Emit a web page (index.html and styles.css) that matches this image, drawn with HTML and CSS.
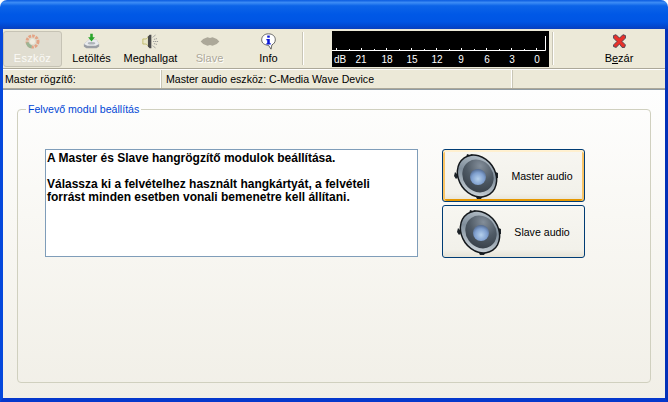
FILE: index.html
```html
<!DOCTYPE html>
<html lang="hu">
<head>
    <meta charset="UTF-8">
    <title>Felvevő modul beállítás</title>
    <link rel="stylesheet" href="styles.css">
</head>
<body>
    <svg class="defs" width="0" height="0">
        <defs>
            <radialGradient id="coneGrad" cx="0.3" cy="0.25" r="0.9">
                <stop offset="0" stop-color="#838e9a"/>
                <stop offset="0.5" stop-color="#4f5a65"/>
                <stop offset="1" stop-color="#343c45"/>
            </radialGradient>
            <radialGradient id="capGrad" cx="0.5" cy="0.62" r="0.6">
                <stop offset="0" stop-color="#b5d0ec"/>
                <stop offset="0.65" stop-color="#7f9fce"/>
                <stop offset="1" stop-color="#566e94"/>
            </radialGradient>
            <linearGradient id="rimGrad" x1="0" y1="0" x2="1" y2="1">
                <stop offset="0" stop-color="#c4ced6"/>
                <stop offset="0.45" stop-color="#808e9b"/>
                <stop offset="1" stop-color="#dfe6ea"/>
            </linearGradient>
            <symbol id="bigSpeaker" viewBox="0 0 46 46">
                <path d="M12 5l1-4 3 1 2-1 2 2-2 3zM39 18l5 2 0 5-4 1zM21 42l2 4 4 0 2-3zM1 19l-1 4 2 3 3-3z" fill="#1d2328"/>
                <ellipse cx="23" cy="23" rx="23" ry="19" transform="rotate(55 23 23)" fill="#14181c"/>
                <ellipse cx="23" cy="23" rx="21.500" ry="17.500" transform="rotate(55 23 23)" fill="url(#rimGrad)"/>
                <ellipse cx="24" cy="23" rx="17" ry="15" transform="rotate(55 24 23)" fill="url(#coneGrad)"/>
                <circle cx="24" cy="24" r="8" fill="url(#capGrad)"/>
            </symbol>
        </defs>
    </svg>

    <div class="window">
        <div class="titlebar"></div>
        <div class="frame">
            <div class="toolbar">
                <div class="tool tool-pressed">
                    <svg class="tool-icon" viewBox="0 0 20 20">
                        <circle cx="10" cy="10" r="6.500" fill="none" stroke="#e59a78" stroke-width="3.500" stroke-dasharray="3 1.200"/>
                        <path d="M4 11a6.500 6.500 0 0 0 5 5.500" fill="none" stroke="#8fae8a" stroke-width="3.500"/>
                        <circle cx="10" cy="10" r="3" fill="#f3efe2"/>
                    </svg>
                    <span>Eszköz</span>
                </div>
                <div class="tool">
                    <svg class="tool-icon" viewBox="0 0 20 20">
                        <path d="M1 13l6-5h9l3 5v3l-3 2H4l-3-2z" fill="#9a9ea4"/>
                        <path d="M1 13l6-5h9l3 5-4 2H5z" fill="#e9ebee"/>
                        <ellipse cx="10" cy="12" rx="4.500" ry="1.500" fill="#aeb4ba"/>
                        <path d="M8.500 1h3v4h2.500l-4 5-4-5h2.500z" fill="#2ba52b"/>
                    </svg>
                    <span>Letöltés</span>
                </div>
                <div class="tool">
                    <svg class="tool-icon" viewBox="0 0 20 20">
                        <path d="M1 7h4l4-4v14l-4-4H1z" fill="#e8e6c8" stroke="#b2ad4a" stroke-width="0.800"/>
                        <path d="M7 4l2-2h2v16H9l-2-2z" fill="#4a4a4a"/>
                        <path d="M13 10h6M12.500 5l4-3M12.500 15l4 3M14 7.500l4-1M14 12.500l4 1" stroke="#8c8c8c" stroke-width="1" stroke-dasharray="1.500 .7" fill="none"/>
                    </svg>
                    <span>Meghallgat</span>
                </div>
                <div class="tool tool-disabled">
                    <svg class="tool-icon tool-icon-wide" viewBox="0 0 24 20">
                        <path d="M1 10l3-3 5-2 3 1 3-1 5 2 3 3-3 3-5 2-3-1-3 1-5-2z" fill="#aca899"/>
                    </svg>
                    <span>Slave</span>
                </div>
                <div class="tool">
                    <svg class="tool-icon" viewBox="0 0 20 20">
                        <path d="M10 1c5 0 8 3 8 7 0 3-2 5-4 6l-1 5-3-4.500C5 14 2 12 2 8c0-4 3-7 8-7z" fill="#fff" stroke="#3c3c3c" stroke-width="0.900"/>
                        <rect x="8.500" y="3" width="3" height="2.500" fill="#0a18d8"/>
                        <path d="M7.500 7h4v5h1.200v1.500H7.500V12h1V8.500h-1z" fill="#0a18d8"/>
                    </svg>
                    <span>Info</span>
                </div>
                <div class="sep sep-first"></div>
                <svg class="meter" width="217" height="36" viewBox="0 0 217 36">
                    <rect width="217" height="36" fill="#000"/>
                    <path d="M0 19.500H213.500V5" fill="none" stroke="#fff"/>
                    <path d="M29.500 17v2M54.500 17v2M79.500 17v2M104.500 17v2M129.500 17v2M154.500 17v2M179.500 17v2M204.500 17v2M4.500 17v2M17.500 18v1M42.500 18v1M67.500 18v1M92.500 18v1M117.500 18v1M142.500 18v1M167.500 18v1M192.500 18v1" stroke="#fff"/>
                    <g class="meter-text">
                        <text x="2" y="32">dB</text>
                        <text x="29" y="32" text-anchor="middle">21</text>
                        <text x="55" y="32" text-anchor="middle">18</text>
                        <text x="80" y="32" text-anchor="middle">15</text>
                        <text x="105" y="32" text-anchor="middle">12</text>
                        <text x="129" y="32" text-anchor="middle">9</text>
                        <text x="155" y="32" text-anchor="middle">6</text>
                        <text x="180" y="32" text-anchor="middle">3</text>
                        <text x="205" y="32" text-anchor="middle">0</text>
                    </g>
                </svg>
                <div class="sep"></div>
                <div class="tool tool-close">
                    <svg class="tool-icon" viewBox="0 0 20 20">
                        <path d="M3 3l3-1 4 4 4-4 3 1 0 3-4 4 4 4-1 3-3 0-3-4-4 4-3-1 0-2 4-4-4-4z" fill="#e8312a" stroke="#3a3f52" stroke-width="1"/>
                    </svg>
                    <span>B<u>e</u>zár</span>
                </div>
            </div>

            <div class="statusrow">
                <div class="cell cell-first">Master rögzítő:</div>
                <div class="cell cell-second">Master audio eszköz: C-Media Wave Device</div>
                <div class="cell cell-last"></div>
            </div>

            <div class="client">
                <fieldset class="group">
                    <legend>Felvevő modul beállítás</legend>
                    <div class="group-row">
                        <div class="memo">
                            <p>A Master és Slave hangrögzítő modulok beállítása.</p>
                            <p>Válassza ki a felvételhez használt hangkártyát, a felvételi<br>forrást minden esetben vonali bemenetre kell állítani.</p>
                        </div>
                        <div class="buttons">
                            <div class="audio-btn audio-btn-focus">
                                <svg class="speaker" width="46" height="46"><use href="#bigSpeaker"/></svg>
                                <span>Master audio</span>
                            </div>
                            <div class="audio-btn">
                                <svg class="speaker" width="46" height="46"><use href="#bigSpeaker"/></svg>
                                <span>Slave audio</span>
                            </div>
                        </div>
                    </div>
                </fieldset>
            </div>
        </div>
    </div>
</body>
</html>
```

FILE: styles.css
```css
html, body {
    margin: 0;
    padding: 0;
    background: #fff;
}

body {
    font-family: 'Liberation Sans', Arial, sans-serif;
    font-size: 11px;
    color: #000;
    width: 668px;
    height: 402px;
    overflow: hidden;
}

.defs {
    position: absolute;
}

.window {
    width: 668px;
    height: 402px;
    display: flex;
    flex-direction: column;
}

.titlebar {
    height: 29px;
    flex: none;
    border-radius: 7px 7px 0 0;
    background: linear-gradient(180deg, #0a5be0 0%, #3c8cf5 9%, #0c64e8 20%, #0058e6 50%, #0055e4 75%, #0148d0 90%, #0a3fbe 100%);
}

.frame {
    flex: 1;
    display: flex;
    flex-direction: column;
    min-height: 0;
    border-left: 3px solid #0548dc;
    border-right: 3px solid #0331b8;
    border-bottom: 4px solid #0538cc;
    background: #ece9d8;
}

.toolbar {
    height: 40px;
    flex: none;
    box-sizing: border-box;
    padding-top: 2px;
    display: flex;
    align-items: flex-start;
    border-bottom: 1px solid #aca899;
}

.tool {
    width: 59px;
    height: 36px;
    box-sizing: border-box;
    flex: none;
    display: flex;
    flex-direction: column;
    align-items: center;
    padding-top: 2px;
    font-size: 11px;
    line-height: 14px;
}

.tool-icon {
    width: 17px;
    height: 17px;
    flex: none;
    margin-bottom: 1px;
}

.tool-icon-wide {
    width: 22px;
}

.tool-pressed {
    background: #e0ddd0;
    border: 1px solid #c6c3b5;
    border-radius: 3px;
    color: #fbfaf6;
    padding-top: 1px;
    letter-spacing: 0.3px;
}

.tool-pressed .tool-icon {
    opacity: 0.85;
}

.tool-disabled {
    color: #aca899;
    text-shadow: 1px 1px 0 #fff;
}

.tool-close {
    width: 60px;
    margin-left: 34px;
}

.sep {
    width: 1px;
    height: 33px;
    flex: none;
    margin: 1px 2px 0 3px;
    background: #c9c6b6;
    box-shadow: 1px 0 0 #fff;
}

.sep-first {
    margin: 1px 29px 0 4px;
}

.meter {
    flex: none;
    display: block;
}

.meter-text text {
    fill: #fff;
    font-family: 'Liberation Sans', Arial, sans-serif;
    font-size: 10px;
}

.statusrow {
    height: 20px;
    flex: none;
    display: flex;
    background: #ece9d8;
    border-top: 1px solid #fff;
    border-bottom: 1px solid #aca899;
    box-sizing: border-box;
    font-size: 10.600px;
    line-height: 19px;
}

.cell {
    box-sizing: border-box;
    white-space: nowrap;
    padding-left: 2px;
    border-right: 1px solid #fff;
    box-shadow: 1px 0 0 #c9c6b6;
}

.cell-first {
    width: 158px;
}

.cell-second {
    width: 351px;
    padding-left: 5px;
}

.cell-last {
    flex: 1;
    border-right: none;
    box-shadow: none;
}

.client {
    flex: 1;
    min-height: 0;
    box-sizing: border-box;
    padding: 11px 14px 15px 14px;
    display: flex;
    border-top: 1px solid #8f9ba3;
    background: linear-gradient(180deg, #fefefe 0%, #f9f8f4 40%, #f1efe7 100%);
}

.group {
    flex: 1;
    margin: 0;
    min-width: 0;
    padding: 32px 65px 0 27px;
    border: 1px solid #d0d0bf;
    border-radius: 4px;
    box-sizing: border-box;
}

.group legend {
    color: #0046d5;
    font-size: 10.600px;
    line-height: 16px;
    padding: 0 2px;
    margin-left: -19px;
}

.group-row {
    display: flex;
    align-items: flex-start;
    gap: 24px;
}

.memo {
    width: 373px;
    height: 108px;
    box-sizing: border-box;
    flex: none;
    padding: 2px 1px;
    background: #fff;
    border: 1px solid #7f9db9;
    font-size: 12px;
    font-weight: bold;
    line-height: 13px;
}

.memo p {
    margin: 0 0 13px 0;
}

.buttons {
    width: 143px;
    flex: none;
    display: flex;
    flex-direction: column;
    gap: 3px;
}

.audio-btn {
    height: 53px;
    box-sizing: border-box;
    display: flex;
    align-items: center;
    justify-content: center;
    gap: 11px;
    font-size: 10.600px;
    border: 1px solid #003c74;
    border-radius: 3px;
    background: linear-gradient(180deg, #f7f6f1 0%, #f2f1ea 85%, #e6e3d6 100%);
}

.audio-btn-focus {
    box-shadow: inset 0 2px 0 #fff0cf, inset 2px 0 0 #f9c466, inset -2px 0 0 #f9c466, inset 0 -2px 0 #e59700;
}

.speaker {
    flex: none;
    display: block;
}
```
